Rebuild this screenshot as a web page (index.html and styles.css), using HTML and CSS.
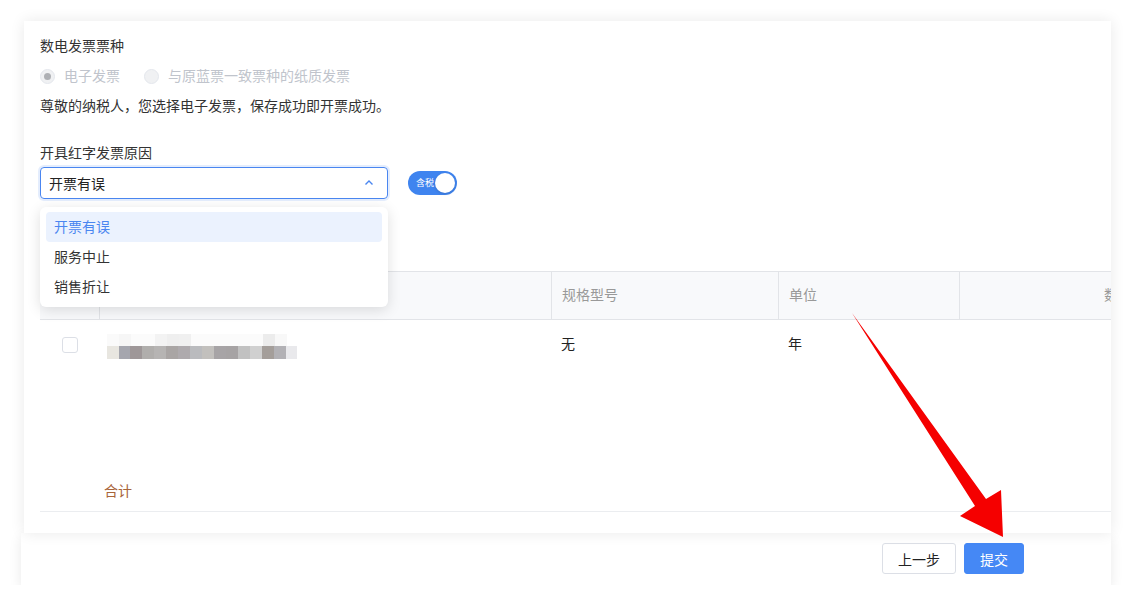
FILE: index.html
```html
<!DOCTYPE html>
<html lang="zh-CN">
  <head>
    <meta charset="UTF-8" />
    <title>开具红字发票</title>
    <link rel="stylesheet" href="styles.css">
  </head>
  <body>
    <div class="page">
      <div class="card">
        <div class="field-label">数电发票票种</div>
        <div class="radio-group">
          <label class="radio checked"><span class="radio-dot"></span>电子发票</label>
          <label class="radio"><span class="radio-dot"></span>与原蓝票一致票种的纸质发票</label>
        </div>
        <p class="notice">尊敬的纳税人，您选择电子发票，保存成功即开票成功。</p>

        <div class="field-label reason-label">开具红字发票原因</div>
        <div class="select-row">
          <div class="select-wrap">
            <div class="select">
              <span>开票有误</span>
              <svg class="select-arrow" width="12" height="12" viewBox="0 0 12 12">
                <path d="M2.5 7.5 L6 4 L9.5 7.5" fill="none" stroke="#4a86f0" stroke-width="1.4" />
              </svg>
            </div>
            <!-- 下拉选项 -->
            <ul class="dropdown">
              <li class="active">开票有误</li>
              <li>服务中止</li>
              <li>销售折让</li>
            </ul>
          </div>
          <div class="switch">
            <span class="switch-text">含税</span>
            <span class="switch-knob"></span>
          </div>
        </div>

        <div class="table">
          <div class="table-head">
            <div class="th"></div>
            <div class="th">项目名称</div>
            <div class="th">规格型号</div>
            <div class="th">单位</div>
            <div class="th th-last">数量</div>
          </div>
          <div class="table-row">
            <div class="td td-check"><span class="checkbox"></span></div>
            <div class="td td-name">
              <div class="blur">
                <span class="blur-top"></span>
                <span class="blur-bottom"></span>
              </div>
            </div>
            <div class="td">无</div>
            <div class="td">年</div>
            <div class="td"></div>
          </div>
          <div class="table-spacer"></div>
          <div class="table-sum">
            <span class="sum-text">合计</span>
          </div>
        </div>
      </div>

      <div class="footer">
        <button class="btn">上一步</button>
        <button class="btn btn-primary">提交</button>
      </div>
    </div>

    <!-- 标注箭头 -->
    <svg class="annotation" width="1132" height="606" viewBox="0 0 1132 606">
      <polygon points="852,313 986,499 1001,490 1003,537 960,516 975,506" fill="#f50000" />
    </svg>
  </body>
</html>
```

FILE: styles.css
```css
body {
  margin: 0;
  padding: 0;
  background-color: #ffffff;
  font-family: "Liberation Sans", "Noto Sans CJK SC", sans-serif;
  font-size: 14px;
  color: #333;
}
.page {
  padding-top: 21px;
}
.card {
  position: relative;
  z-index: 1;
  margin-left: 24px;
  width: 1087px;
  height: 512px;
  box-sizing: border-box;
  padding: 15px 0 21px 16px;
  background-color: #fff;
  box-shadow: 0 0 14px rgba(0, 0, 0, 0.09);
  overflow: hidden;
}
.field-label {
  line-height: 20px;
  color: #333;
}
.radio-group {
  display: flex;
  margin-top: 10px;
  line-height: 20px;
}
.radio {
  display: flex;
  align-items: center;
  color: #c0c4cc;
  margin-right: 24px;
}
.radio-dot {
  width: 13px;
  height: 13px;
  border: 1px solid #e4e7ed;
  border-radius: 50%;
  background-color: #f0f1f3;
  margin-right: 9px;
  display: flex;
  align-items: center;
  justify-content: center;
}
.radio.checked .radio-dot::after {
  content: "";
  width: 7px;
  height: 7px;
  border-radius: 50%;
  background-color: #aeb0b4;
}
.notice {
  margin: 10px 0 0;
  line-height: 20px;
  color: #333;
}
.reason-label {
  margin-top: 27px;
}
.select-row {
  display: flex;
  align-items: flex-start;
  margin-top: 4px;
}
.select-wrap {
  position: relative;
  width: 348px;
}
.select {
  height: 32px;
  box-sizing: border-box;
  border: 1px solid #4a86f0;
  border-radius: 4px;
  box-shadow: 0 0 0 2px rgba(74, 134, 240, 0.15);
  padding: 0 12px 0 8px;
  display: flex;
  align-items: center;
  justify-content: space-between;
  color: #222;
}
.dropdown {
  position: absolute;
  top: 40px;
  left: 0;
  width: 100%;
  box-sizing: border-box;
  margin: 0;
  padding: 5px 6px;
  list-style: none;
  background-color: #fff;
  border-radius: 6px;
  box-shadow: 0 3px 14px rgba(0, 0, 0, 0.13);
  z-index: 3;
}
.dropdown li {
  height: 30px;
  line-height: 30px;
  padding-left: 8px;
  border-radius: 4px;
  color: #333;
}
.dropdown li.active {
  background-color: #ebf2fe;
  color: #4a86f0;
}
.switch {
  margin: 4px 0 0 20px;
  width: 49px;
  height: 24px;
  border-radius: 12px;
  background-color: #3f84ef;
  display: flex;
  align-items: center;
  box-sizing: border-box;
  padding: 0 2px 0 8px;
}
.switch-text {
  flex: 1;
  color: #fff;
  font-size: 9px;
  line-height: 10px;
  white-space: nowrap;
}
.switch-knob {
  flex: none;
  width: 20px;
  height: 20px;
  border-radius: 50%;
  background-color: #fff;
  box-shadow: 0 1px 3px rgba(0, 0, 0, 0.15);
}
.table {
  margin-top: 72px;
  width: 1180px;
}
.table-head,
.table-row {
  display: grid;
  grid-template-columns: 59px 452px 227px 181px 261px;
}
.table-head {
  height: 49px;
  box-sizing: border-box;
  border-top: 1px solid #e2e4e8;
  border-bottom: 1px solid #e2e4e8;
  background-color: #f8f9fb;
}
.th {
  display: flex;
  align-items: center;
  padding: 0 0 3px 10px;
  color: #999;
  border-left: 1px solid #e2e4e8;
}
.th:first-child {
  border-left: none;
}
.th-last {
  padding-left: 144px;
}
.table-row {
  height: 50px;
}
.td {
  display: flex;
  align-items: center;
  padding: 0 0 4px 10px;
  color: #222;
}
.td-check {
  padding: 0 0 0 22px;
}
.checkbox {
  width: 14px;
  height: 14px;
  border: 1px solid #dcdfe6;
  border-radius: 3px;
  background-color: #fff;
}
.td-name {
  padding: 0 0 0 8px;
}
.blur {
  display: flex;
  flex-direction: column;
  width: 190px;
  height: 25px;
  margin-top: 2px;
}
.blur-top {
  height: 12px;
  background: linear-gradient(90deg,
    #fafafa 0 12px, #f6f6f6 12px 24px, #fbfbfb 24px 48px, #f3f3f3 48px 60px,
    #efefef 60px 72px, #f0f0f0 72px 84px, #fbfbfb 84px 156px, #ececec 156px 168px,
    #f8f8f8 168px 180px, #ffffff 180px);
}
.blur-bottom {
  height: 13px;
  background: linear-gradient(90deg,
    #e8e6e0 0 12px, #a5a6ae 12px 23px, #9e9798 23px 35px, #b0aeac 35px 47px,
    #b6b4b3 47px 59px, #a9a5a4 59px 71px, #aeaaad 71px 83px, #babbbe 83px 95px,
    #c2c0bd 95px 107px, #a7a4a6 107px 119px, #a6a3a4 119px 131px, #c1c1c1 131px 143px,
    #d0d0d0 143px 155px, #a49e9a 155px 167px, #b2b1b5 167px 179px, #e9e9ec 179px 190px);
}
.table-spacer {
  height: 101px;
}
.table-sum {
  height: 41px;
  box-sizing: border-box;
  border-bottom: 1px solid #ebedf0;
  display: flex;
  align-items: center;
  padding: 0 0 2px 64px;
  width: 1071px;
}
.sum-text {
  color: #a8643a;
}
.footer {
  margin-left: 21px;
  width: 1090px;
  height: 52px;
  box-sizing: border-box;
  padding: 10px 87px 0 0;
  display: flex;
  justify-content: flex-end;
  align-items: flex-start;
  gap: 8px;
  background-color: #fff;
  box-shadow: 0 4px 12px rgba(0, 0, 0, 0.09);
}
.btn {
  height: 31px;
  padding: 0 14px;
  border: 1px solid #dcdfe6;
  border-radius: 3px;
  background-color: #fff;
  color: #222;
  font-family: "Liberation Sans", "Noto Sans CJK SC", sans-serif;
  font-size: 14px;
  cursor: pointer;
}
.btn-primary {
  width: 60px;
  padding: 0;
  border-color: #4588f5;
  background-color: #4588f5;
  color: #fff;
}
.btn:first-child {
  width: 74px;
  padding: 0;
}
.annotation {
  position: absolute;
  top: 0;
  left: 0;
  z-index: 5;
  pointer-events: none;
}
```
